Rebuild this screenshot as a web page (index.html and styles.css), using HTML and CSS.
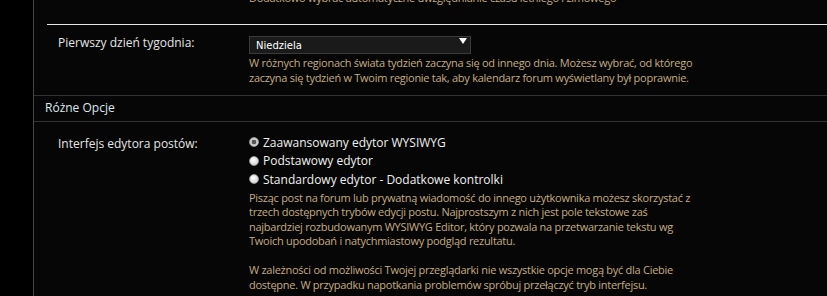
FILE: index.html
```html
<!DOCTYPE html>
<html lang="pl">
<head>
    <meta charset="UTF-8">
    <title>Ustawienia</title>
    <link rel="stylesheet" href="styles.css">
</head>
<body>
    <div class="panel">
        <div class="clip">
            <div class="desc">Dodatkowo wybrać automatyczne uwzględnianie czasu letniego i zimowego</div>
        </div>
        <hr class="sep">

        <div class="row first">
            <label class="label" for="startDay">Pierwszy dzień tygodnia:</label>
            <div class="field">
                <div class="select-wrap">
                    <select id="startDay">
                        <option>Niedziela</option>
                        <option>Poniedziałek</option>
                        <option>Sobota</option>
                    </select>
                </div>
                <div class="desc">W różnych regionach świata tydzień zaczyna się od innego dnia. Możesz wybrać, od którego<br>
                zaczyna się tydzień w Twoim regionie tak, aby kalendarz forum wyświetlany był poprawnie.</div>
            </div>
        </div>

        <div class="section-head">Różne Opcje</div>

        <div class="row second">
            <div class="label">Interfejs edytora postów:</div>
            <div class="field">
                <label class="option"><input type="radio" name="editor" checked> Zaawansowany edytor WYSIWYG</label>
                <label class="option"><input type="radio" name="editor"> Podstawowy edytor</label>
                <label class="option"><input type="radio" name="editor"> Standardowy edytor - Dodatkowe kontrolki</label>
                <div class="desc editor-desc">Pisząc post na forum lub prywatną wiadomość do innego użytkownika możesz skorzystać z<br>
                trzech dostępnych trybów edycji postu. Najprostszym z nich jest pole tekstowe zaś<br>
                najbardziej rozbudowanym WYSIWYG Editor, który pozwala na przetwarzanie tekstu wg<br>
                Twoich upodobań i natychmiastowy podgląd rezultatu.<br>
                <br>
                W zależności od możliwości Twojej przeglądarki nie wszystkie opcje mogą być dla Ciebie<br>
                dostępne. W przypadku napotkania problemów spróbuj przełączyć tryb interfejsu.</div>
            </div>
        </div>
    </div>
</body>
</html>
```

FILE: styles.css
```css
body {
    margin: 0;
    background-color: #000;
    font-family: "Open Sans", sans-serif;
    overflow: hidden;
}
.panel {
    margin-left: 33px;
    border-left: 1px solid #444;
    background-color: #060606;
    min-height: 296px;
    padding-bottom: 30px;
}
.clip {
    margin-top: -9px;
    padding-left: 215px;
}
.desc {
    font-size: 11px;
    line-height: 14.5px;
    letter-spacing: -0.27px;
    color: #c4ac82;
    white-space: nowrap;
}
.sep {
    margin: 18px 0 0 13px;
    border: none;
    border-top: 1px solid #e6e6e6;
    height: 0;
}
.row {
    display: grid;
    grid-template-columns: 191px 1fr;
    padding-left: 24px;
}
.row.first {
    padding-top: 7px;
    padding-bottom: 10px;
}
.row.second {
    padding-top: 11px;
}
.label {
    font-size: 12px;
    color: #e4e4e4;
    padding-top: 2px;
}
.select-wrap {
    position: relative;
    width: 222px;
    margin-bottom: 2px;
}
.select-wrap select {
    appearance: none;
    -webkit-appearance: none;
    width: 222px;
    height: 18px;
    padding: 0 0 0 6px;
    background-color: #1a1a1a;
    border: 1px solid #3a3a3a;
    color: #fff;
    font-family: "DejaVu Sans", sans-serif;
    font-size: 10px;
    outline: none;
}
.select-wrap::after {
    content: "";
    position: absolute;
    right: 4px;
    top: 6px;
    border-left: 4px solid transparent;
    border-right: 4px solid transparent;
    border-top: 6px solid #fff;
}
.section-head {
    border-top: 1px solid #333;
    border-bottom: 1px solid #333;
    height: 25px;
    line-height: 24px;
    padding-left: 11px;
    font-size: 12px;
    color: #dde6ee;
}
.option {
    display: flex;
    align-items: center;
    gap: 4px;
    height: 18.5px;
    font-size: 12px;
    color: #f0f0f0;
}
.option input {
    appearance: none;
    -webkit-appearance: none;
    width: 10px;
    height: 10px;
    margin: 0;
    border-radius: 50%;
    background: radial-gradient(circle at 40% 35%, #fff, #c8c8c8);
    border: 1px solid #999;
    box-sizing: border-box;
}
.option input:checked {
    background: radial-gradient(circle, #555 0 2px, #bbb 2.5px, #eee 5px);
}
.editor-desc {
    margin-top: 2px;
}
```
